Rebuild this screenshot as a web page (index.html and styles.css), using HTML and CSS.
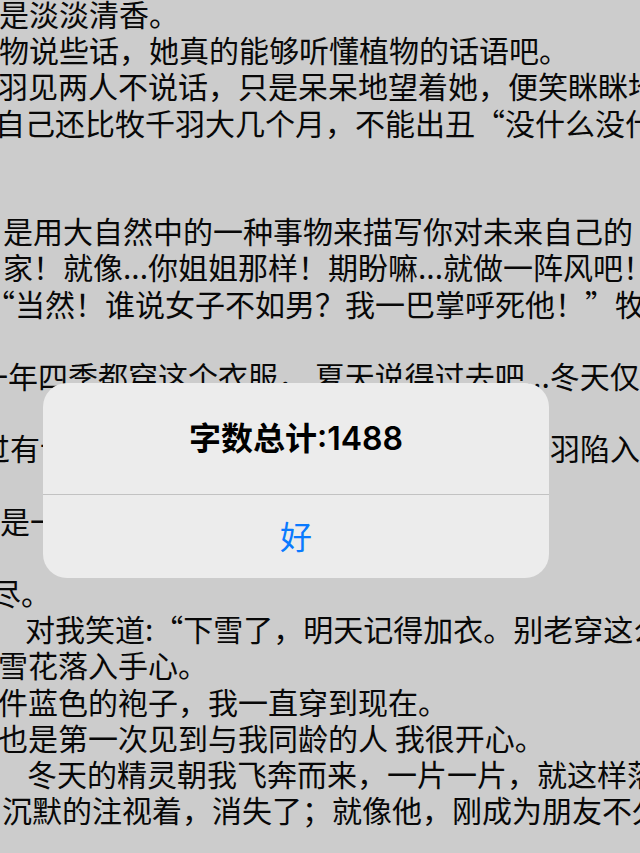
FILE: index.html
```html
<!DOCTYPE html>
<html lang="zh-CN">
<head>
<meta charset="utf-8">
<title>字数总计</title>
<link rel="stylesheet" href="styles.css">
</head>
<body>
<div class="screen">
  <div class="reader">
    <p class="ln s-1">是淡淡清香。</p>
    <p class="ln s-1">物说些话，她真的能够听懂植物的话语吧。</p>
    <p class="ln s-2">羽见两人不说话，只是呆呆地望着她，便笑眯眯地说</p>
    <p class="ln s-5">自己还比牧千羽大几个月，不能出丑“没什么没什么</p>
    <p class="ln"></p>
    <p class="ln"></p>
    <p class="ln s3">是用大自然中的一种事物来描写你对未来自己的</p>
    <p class="ln s3">家！就像...你姐姐那样！期盼嘛...就做一阵风吧！</p>
    <p class="ln s-15">“当然！谁说女子不如男？我一巴掌呼死他！”牧千</p>
    <p class="ln"></p>
    <p class="ln s-22">一年四季都穿这个衣服， 夏天说得过去吧...冬天仅</p>
    <p class="ln"></p>
    <p class="ln s-20">过有许多人在森林中迷了路，走了好久牧千羽陷入</p>
    <p class="ln"></p>
    <p class="ln s0">是一个很安静的孩子。</p>
    <p class="ln"></p>
    <p class="ln s-9">尽。</p>
    <p class="ln"><span class="cut">，</span>对我笑道:“下雪了，明天记得加衣。别老穿这么薄</p>
    <p class="ln s-2">雪花落入手心。</p>
    <p class="ln s-2">件蓝色的袍子，我一直穿到现在。</p>
    <p class="ln s-2">也是第一次见到与我同龄的人 我很开心。</p>
    <p class="ln"><span class="cut cut-wide">，</span>冬天的精灵朝我飞奔而来，一片一片，就这样落</p>
    <p class="ln s2">沉默的注视着，消失了；就像他，刚成为朋友不久</p>
  </div>

  <div class="alert" role="alertdialog">
    <div class="alert-title">字数总计:1488</div>
    <div class="alert-actions">
      <button class="alert-btn" type="button">好</button>
    </div>
  </div>
</div>
</body>
</html>
```

FILE: styles.css
```css
* { box-sizing: border-box; }

html, body {
  margin: 0;
  padding: 0;
  background: #cccccc;
}

.screen {
  position: relative;
  width: 640px;
  height: 853px;
  overflow: hidden;
  background: #cccccc;
}

.reader {
  margin-top: -5px;
  font-family: "Noto Sans CJK SC", "Noto Sans", sans-serif;
  font-size: 30px;
  line-height: 36.2px;
  color: #080808;
}

.ln {
  margin: 0;
  height: 36.2px;
  white-space: nowrap;
}

.cut {
  display: inline-block;
  width: 30px;
  margin-left: -11px;
  margin-right: 6px;
}
.cut-wide { margin-right: 8px; }

.s2 { margin-left: 2px; }
.s0 { margin-left: 0; }
.s3 { margin-left: 3px; }
.s-1 { margin-left: -1px; }
.s-2 { margin-left: -2px; }
.s-5 { margin-left: -5px; }
.s-9 { margin-left: -9px; }
.s-15 { margin-left: -15px; }
.s-20 { margin-left: -20px; }
.s-22 { margin-left: -22px; }

.alert {
  position: absolute;
  left: 43px;
  top: 383px;
  width: 506px;
  height: 195px;
  background: #ececec;
  border-radius: 24px;
  display: flex;
  flex-direction: column;
  overflow: hidden;
}

.alert-title {
  height: 111px;
  display: flex;
  align-items: center;
  justify-content: center;
  font-family: "Inter", "Noto Sans CJK SC", sans-serif;
  font-weight: 600;
  font-size: 32px;
  color: #000;
  padding-bottom: 5px;
}

.alert-actions {
  flex: 1;
  border-top: 1px solid #c2c2c2;
  display: flex;
}

.alert-btn {
  flex: 1;
  border: 0;
  background: transparent;
  font-family: "Noto Sans CJK SC", sans-serif;
  font-size: 32px;
  color: #0a7aff;
  padding: 0 0 4px;
}
```
